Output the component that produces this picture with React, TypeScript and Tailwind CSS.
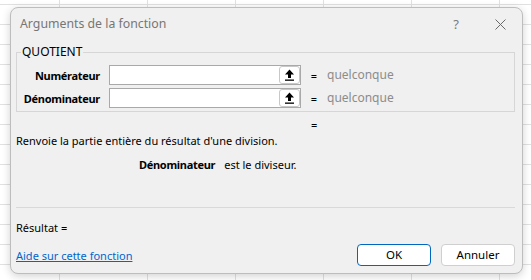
import React from "react";

const font = { fontFamily: '"Noto Sans", "Open Sans", sans-serif' };

function UploadIcon() {
  return (
    <svg width="11" height="12" viewBox="0 0 11 12" className="block">
      <path d="M5.5 0.5 L1 5.5 L4 5.5 L4 9 L7 9 L7 5.5 L10 5.5 Z" fill="#000" />
      <rect x="1" y="10.5" width="9" height="1.3" fill="#000" />
    </svg>
  );
}

function ArgRow({ label }: { label: string }) {
  return (
    <div className="flex items-center h-[20px]">
      <div className="w-[86px] text-right font-bold text-[11px] tracking-[-0.3px] text-black pr-[9px] leading-none whitespace-nowrap">{label}</div>
      <div className="relative w-[192px] h-[20px] bg-white border border-[#a9a9a9]">
        <div className="absolute right-[0px] top-[0px] w-[21px] h-[18px] bg-white border border-[#c8c8c8] rounded-[3px] flex items-center justify-center">
          <UploadIcon />
        </div>
      </div>
      <div className="w-[26px] text-center text-[11px] text-black leading-none">=</div>
      <div className="text-[12px] text-[#8c8c8c] leading-none">quelconque</div>
    </div>
  );
}

export default function App() {
  const cols = [60, 88, 88, 88, 88, 88, 88];
  const rows = [5, 20, 20, 20, 20, 20, 20, 20, 20, 20, 20, 20, 20, 20, 20];
  return (
    <div className="relative w-[531px] h-[280px] bg-white overflow-hidden" style={font}>
      <div className="flex flex-col">
        {rows.map((h, r) => (
          <div key={r} className="flex shrink-0">
            {cols.map((w, c) => (
              <div
                key={c}
                className="shrink-0 border-r border-b border-[#e1e1e1] box-border"
                style={{ width: w, height: h }}
              />
            ))}
          </div>
        ))}
      </div>

      <div className="absolute left-[10px] top-[7px] w-[513px] h-[267px] bg-[#f0f0f0] border border-[#bdbdbd] rounded-[8px] shadow-[0_2px_8px_rgba(0,0,0,0.18)] flex flex-col px-[5px]">
        <div className="h-[31px] pt-[2px] flex items-center pl-[4px] shrink-0">
          <div className="text-[12.3px] text-[#767676] flex-1 leading-none">Arguments de la fonction</div>
          <div className="w-[12px] text-center text-[13px] text-[#7a7a7a] leading-none mr-[33px]">?</div>
          <svg width="11" height="11" viewBox="0 0 11 11" className="mr-[11px]">
            <path d="M0.5 0.5 L10.5 10.5 M10.5 0.5 L0.5 10.5" stroke="#6a6a6a" strokeWidth="1" />
          </svg>
        </div>

        <fieldset className="border border-[#d6d6d6] mt-[7px] pl-[6px] pr-[4px] pb-[3px] pt-[7px] flex flex-col gap-[3px] w-[499px] shrink-0">
          <legend className="h-[12px] flex items-center text-[12px] text-black leading-none ml-[-2px] px-[1px]">QUOTIENT</legend>
          <ArgRow label="Numérateur" />
          <ArgRow label="Dénominateur" />
        </fieldset>

        <div className="h-[20px] mt-[2px] flex items-center text-[11px] text-black leading-none pl-[295px] shrink-0">=</div>
        <div className="h-[12px] flex items-center text-[11px] text-black leading-none shrink-0">
          Renvoie la partie entière du résultat d'une division.
        </div>
        <div className="h-[12px] flex items-center text-[11px] text-black leading-none mt-[12px] pl-[123px] shrink-0">
          <span className="font-bold tracking-[-0.3px]">Dénominateur</span>
          <span className="ml-[9px]">est le diviseur.</span>
        </div>

        <div className="border-t border-[#d9d9d9] mt-[37px] w-[499px] shrink-0" />
        <div className="h-[12px] flex items-center text-[11px] text-black leading-none mt-[13px] shrink-0">Résultat =</div>

        <div className="h-[22px] flex items-center mt-[11px] w-[499px] shrink-0">
          <a className="text-[11px] text-[#0066cc] underline flex-1 leading-none cursor-pointer">Aide sur cette fonction</a>
          <button className="w-[74px] h-[22px] bg-white border border-[#0067c0] rounded-[4px] text-[11.5px] text-black leading-none mr-[10px]">
            OK
          </button>
          <button className="w-[74px] h-[22px] bg-white border border-[#cfcfcf] rounded-[4px] text-[11.5px] text-black leading-none">
            Annuler
          </button>
        </div>
      </div>
    </div>
  );
}
